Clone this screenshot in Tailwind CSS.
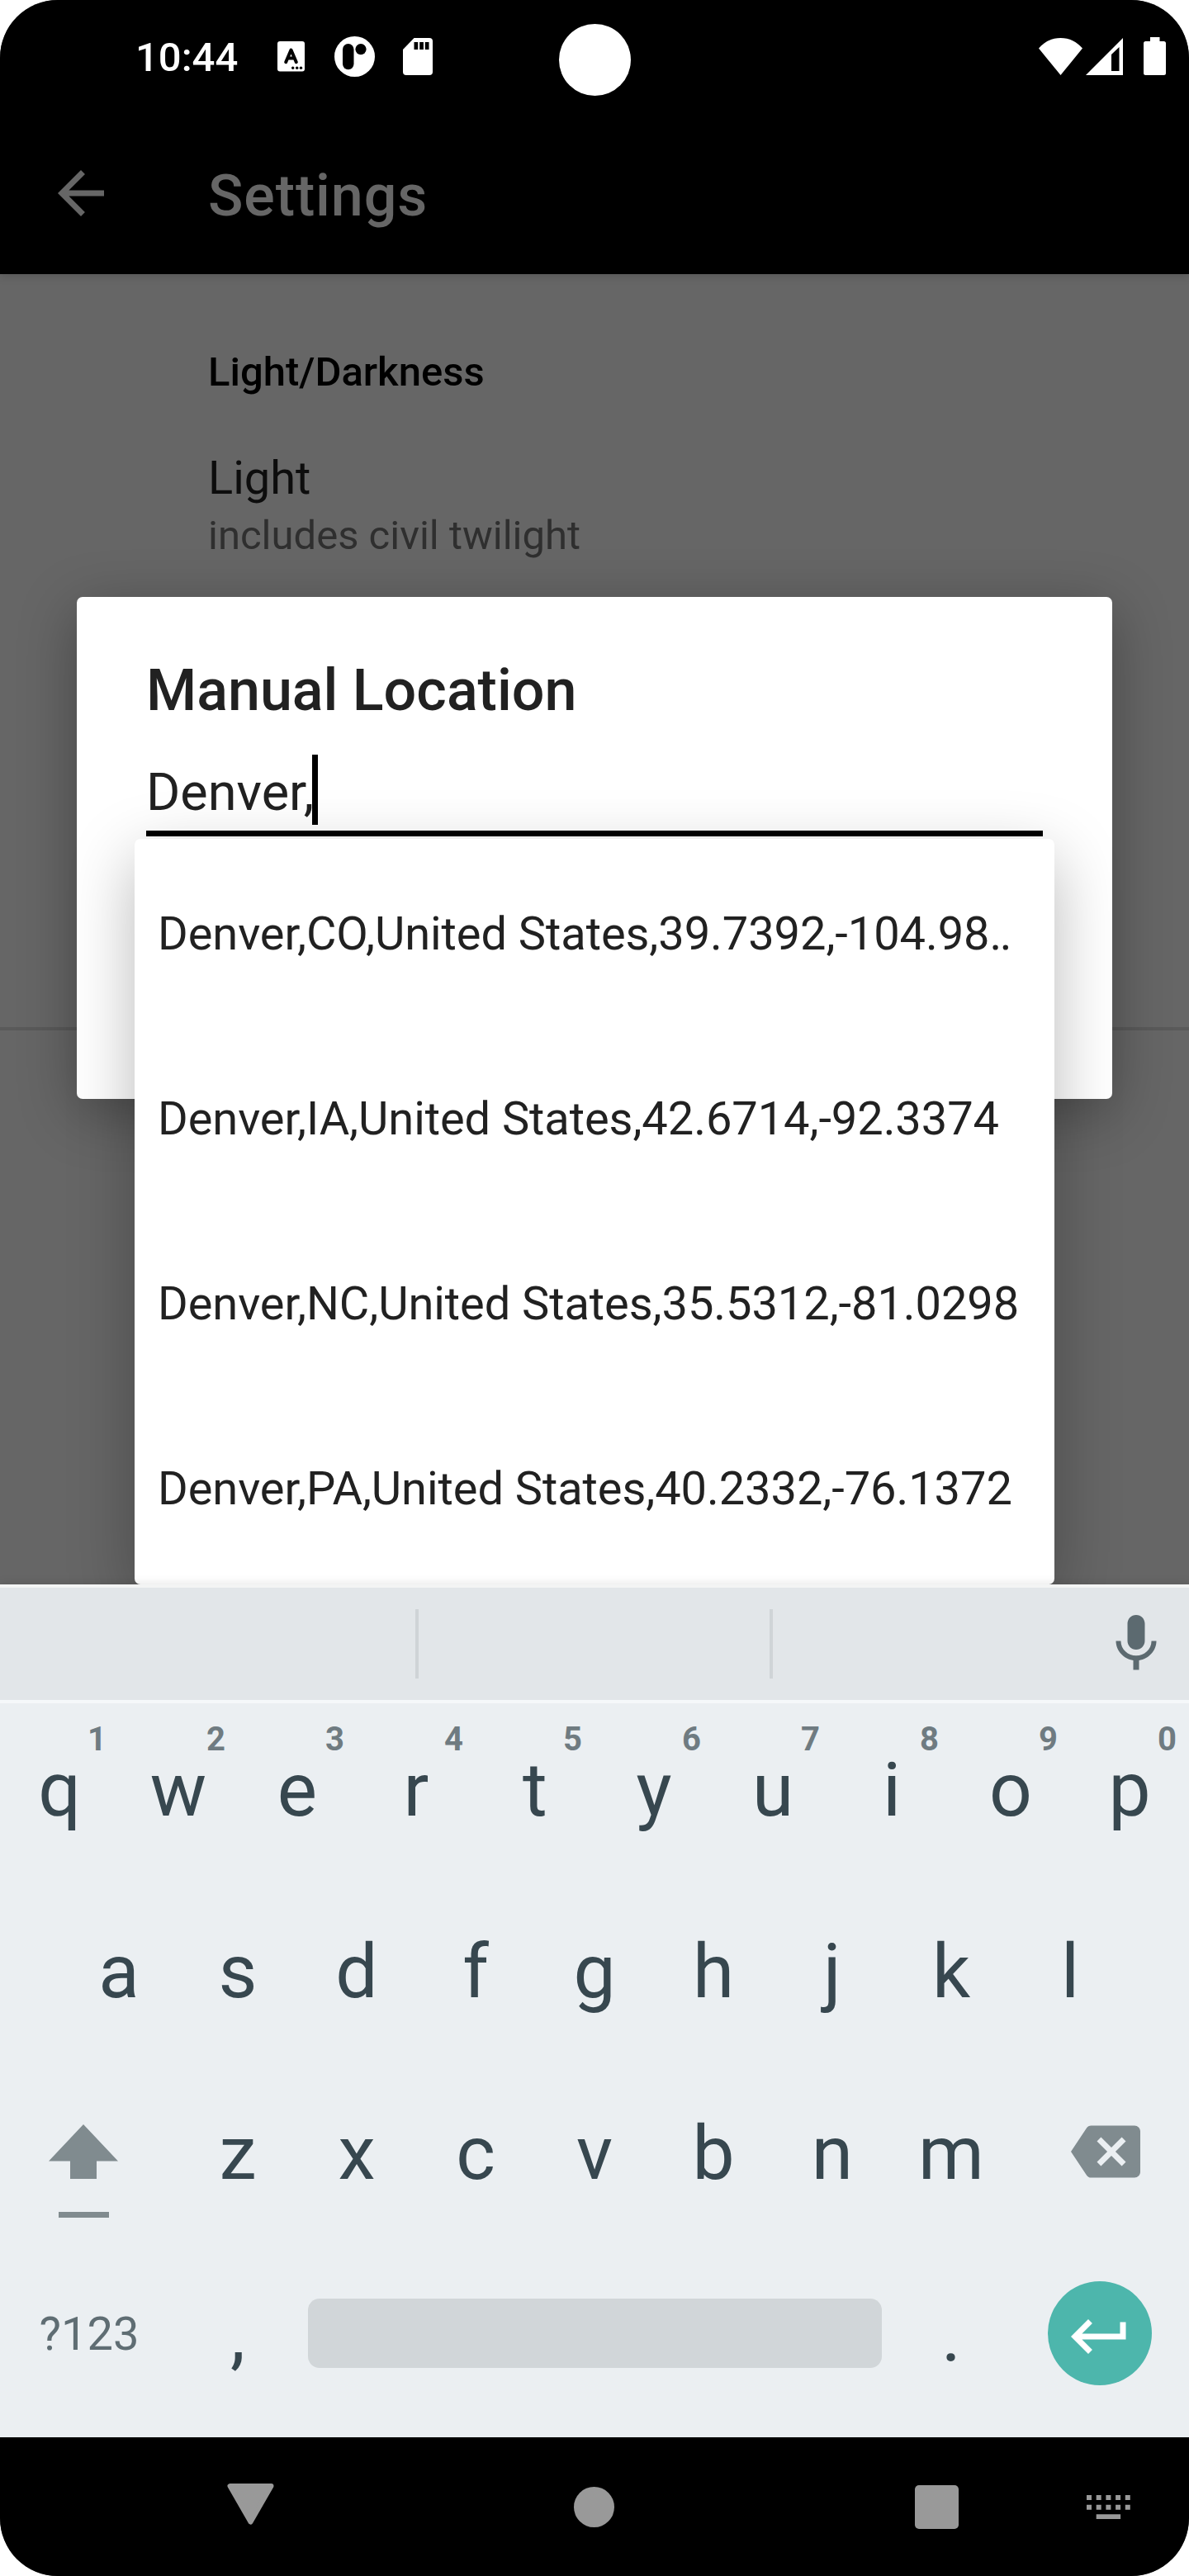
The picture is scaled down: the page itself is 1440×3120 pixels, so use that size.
<!DOCTYPE html>
<html lang="en">
<head>
<meta charset="utf-8">
<title>Settings – Manual Location</title>
<script src="https://cdn.jsdelivr.net/npm/@tailwindcss/browser@4"></script>
</head>
<body class="bg-white">
<div class="relative flex h-[3120px] w-[1440px] flex-col overflow-hidden rounded-[70px] bg-[#666666] font-[Roboto,sans-serif]">

  <!-- Status bar -->
  <div class="relative flex h-[136px] items-center bg-black pl-[164px] pr-[28px] text-white">
    <span class="w-[126px] whitespace-nowrap pt-[4px] text-[49px] font-medium leading-[58px]">10:44</span>
    <svg class="ml-[46px] h-[37px] w-[33px]" viewBox="0 0 33 37"><rect width="33" height="36.500" rx="3" fill="#fff"/><path d="M10.200 25.200 L16.500 10.500 L22.800 25.200 M13 20.500H20" fill="none" stroke="#000" stroke-width="4" stroke-linecap="round" stroke-linejoin="round"/><g fill="#000"><circle cx="18.700" cy="32.300" r="1.700"/><circle cx="23.700" cy="32.300" r="1.700"/><circle cx="28.500" cy="32.300" r="1.700"/></g></svg>
    <svg class="ml-[36px] h-[49px] w-[49px]" viewBox="0 0 49 49"><circle cx="24.500" cy="24.500" r="24.500" fill="#fff"/><rect x="10" y="9" width="13.500" height="31.300" rx="6.700" fill="#000"/><circle cx="32" cy="15.600" r="6.600" fill="#000"/></svg>
    <svg class="ml-[34px] h-[45px] w-[36px]" viewBox="0 0 36 45"><path d="M13.500 0H32a4 4 0 0 1 4 4V41a4 4 0 0 1-4 4H4a4 4 0 0 1-4-4V14Z" fill="#fff"/><path d="M13.500 5h4.700v9h-4.700zM20.200 5h4.700v9h-4.700zM26.800 5h4.700v9h-4.700z" fill="#000"/></svg>
    <div class="absolute left-[677px] top-[29px] size-[87px] rounded-full bg-white"></div>
    <svg class="ml-auto h-[45px] w-[53px]" viewBox="0 0 53 45"><path d="M0 12.500C7 4.500 16 0 26.500 0S46 4.500 53 12.500L26.500 45Z" fill="#fff"/></svg>
    <svg class="ml-[4px] h-[45px] w-[45px]" viewBox="0 0 45 45"><path fill-rule="evenodd" d="M45 0V45H0ZM31 20V40H40.500V11Z" fill="#fff"/></svg>
    <svg class="ml-[25px] h-[46px] w-[27px]" viewBox="0 0 27 46"><path d="M8 0H19.500V5H24.500a2.500 2.500 0 0 1 2.500 2.500V43.500a2.500 2.500 0 0 1-2.500 2.500H2.500a2.500 2.500 0 0 1-2.500-2.500V7.500a2.500 2.500 0 0 1 2.500-2.500H8Z" fill="#fff"/></svg>
  </div>

  <!-- App bar -->
  <header class="flex h-[196px] items-center bg-black pl-[56px] text-[#666666] shadow-[0_3px_10px_rgba(0,0,0,0.15)]">
    <svg class="size-[84px]" viewBox="0 0 24 24" fill="currentColor"><path d="M20 11H7.830l5.590-5.590L12 4l-8 8 8 8 1.410-1.410L7.830 13H20v-2z"/></svg>
    <h1 class="ml-[112px] pt-[6px] text-[70px] font-medium leading-[82px] tracking-[0.9px]">Settings</h1>
  </header>

  <!-- Settings list, dimmed behind the dialog -->
  <main class="h-[1587px]">
    <div class="flex h-[912px] flex-col pl-[252px] pt-[90px]">
      <h2 class="text-[49px] font-medium leading-[58px] text-black">Light/Darkness</h2>
      <p class="mt-[66px] text-[56px] leading-[66px] text-[#0d0d0d]">Light</p>
      <p class="mt-[8px] text-[49px] leading-[58px] text-[#2f2f2f]">includes civil twilight</p>
    </div>
    <div class="h-[4px] bg-[#5a5a5a]"></div>
  </main>

  <!-- Dialog -->
  <section class="absolute left-[93px] top-[723px] flex h-[608px] w-[1254px] flex-col rounded-[7px] bg-white px-[84px] pt-[72px] text-[#212121] shadow-[0_16px_70px_rgba(0,0,0,0.32)]">
    <h2 class="text-[70px] font-medium leading-[82px]">Manual Location</h2>
    <div class="flex h-[136px] items-start border-b-[7px] border-black pt-[37px]">
      <span class="w-[201px] whitespace-nowrap pt-[9px] text-[63px] leading-[74px]">Denver,</span>
      <span class="h-[85px] w-[7px] bg-black"></span>
    </div>
  </section>

  <!-- Suggestions -->
  <ul class="absolute left-[163px] top-[1016px] flex h-[903px] w-[1114px] flex-col rounded-[7px] bg-white px-[28px] pt-[3px] text-[56px] tracking-[-0.07px] text-[#212121] shadow-[0_24px_80px_rgba(0,0,0,0.28)]">
    <li class="h-[224px] whitespace-nowrap leading-[224px]">Denver,CO,United States,39.7392,-104.98<span class="tracking-[-2.4px]">..</span></li>
    <li class="h-[224px] whitespace-nowrap leading-[224px]">Denver,IA,United States,42.6714,-92.3374</li>
    <li class="h-[224px] whitespace-nowrap leading-[224px]">Denver,NC,United States,35.5312,-81.0298</li>
    <li class="h-[224px] whitespace-nowrap leading-[224px]">Denver,PA,United States,40.2332,-76.1372</li>
  </ul>

  <!-- Keyboard -->
  <div class="relative flex h-[1033px] flex-col bg-[#ebeff2] text-[91px] leading-[220px] text-[#37474f] shadow-[0_0_12px_rgba(0,0,0,0.12)]">
    <div class="flex h-[144px] items-center border-y-4 border-t-[#f3f4f4] border-b-[#f5f8fa] bg-[#e2e6e9]">
      <div class="ml-[503px] h-[84px] w-[4px] bg-[#cfd4d7]"></div>
      <div class="ml-[425px] h-[84px] w-[4px] bg-[#cfd4d7]"></div>
      <svg class="ml-[398px] size-[84px] text-[#5c6a70]" viewBox="0 0 24 24" fill="currentColor"><path d="M12 14c1.660 0 2.990-1.340 2.990-3L15 5c0-1.660-1.340-3-3-3S9 3.340 9 5v6c0 1.660 1.340 3 3 3zm5.300-3c0 3-2.540 5.100-5.300 5.100S6.700 14 6.700 11H5c0 3.410 2.720 6.230 6 6.720V21h2v-3.280c3.280-.480 6-3.300 6-6.720h-1.700z"/></svg>
    </div>
    <div class="-mt-[5px] grid h-[220px] grid-cols-10 text-center">
      <div class="relative">q<span class="absolute left-[106px] top-[25px] text-[40px] font-bold leading-[47px] text-[#6f7b81]">1</span></div>
      <div class="relative">w<span class="absolute left-[106px] top-[25px] text-[40px] font-bold leading-[47px] text-[#6f7b81]">2</span></div>
      <div class="relative">e<span class="absolute left-[106px] top-[25px] text-[40px] font-bold leading-[47px] text-[#6f7b81]">3</span></div>
      <div class="relative">r<span class="absolute left-[106px] top-[25px] text-[40px] font-bold leading-[47px] text-[#6f7b81]">4</span></div>
      <div class="relative">t<span class="absolute left-[106px] top-[25px] text-[40px] font-bold leading-[47px] text-[#6f7b81]">5</span></div>
      <div class="relative">y<span class="absolute left-[106px] top-[25px] text-[40px] font-bold leading-[47px] text-[#6f7b81]">6</span></div>
      <div class="relative">u<span class="absolute left-[106px] top-[25px] text-[40px] font-bold leading-[47px] text-[#6f7b81]">7</span></div>
      <div class="relative">i<span class="absolute left-[106px] top-[25px] text-[40px] font-bold leading-[47px] text-[#6f7b81]">8</span></div>
      <div class="relative">o<span class="absolute left-[106px] top-[25px] text-[40px] font-bold leading-[47px] text-[#6f7b81]">9</span></div>
      <div class="relative">p<span class="absolute left-[106px] top-[25px] text-[40px] font-bold leading-[47px] text-[#6f7b81]">0</span></div>
    </div>
    <div class="grid h-[220px] grid-cols-9 px-[72px] text-center">
      <div>a</div><div>s</div><div>d</div><div>f</div><div>g</div><div>h</div><div>j</div><div>k</div><div>l</div>
    </div>
    <div class="flex h-[220px] text-center">
      <div class="w-[216px] pl-[59px] pt-[75px]">
        <svg class="h-[113px] w-[84px] text-[#808b8f]" viewBox="0 0 84 113" fill="currentColor"><path d="M42 0L84 44.500H58V66H26V44.500H0ZM12 106H73V113H12Z"/></svg>
      </div>
      <div class="grid w-[1008px] grid-cols-7"><div>z</div><div>x</div><div>c</div><div>v</div><div>b</div><div>n</div><div>m</div></div>
      <div class="pl-[73px] pt-[66px]">
        <svg class="size-[84px] text-[#808b8f]" viewBox="0 0 24 24" fill="currentColor"><path d="M22 3H7c-.690 0-1.230.350-1.590.880L0 12l5.410 8.110c.360.530.900.890 1.590.890h15c1.100 0 2-.900 2-2V5c0-1.100-.900-2-2-2zm-3 12.590L17.590 17 14 13.410 10.410 17 9 15.590 12.590 12 9 8.410 10.410 7 14 10.590 17.590 7 19 8.410 15.410 12 19 15.590z"/></svg>
      </div>
    </div>
    <div class="flex h-[220px] items-center text-center">
      <div class="-mt-[2px] w-[216px] text-[56px] text-[#5f6d73]">?123</div>
      <div class="w-[144px]">,</div>
      <div class="-mt-[4px] ml-[13px] h-[84px] w-[695px] rounded-[14px] bg-[#d1d6d9]"></div>
      <div class="ml-[12px] w-[144px]">.</div>
      <div class="-mt-[4px] ml-[45px] flex size-[126px] items-center justify-center rounded-full bg-[#4db6ac] pt-[7px] text-white">
        <svg class="size-[84px]" viewBox="0 0 24 24" fill="currentColor"><path d="M19 7v4H5.830l3.580-3.590L8 6l-6 6 6 6 1.410-1.410L5.830 13H21V7h-2z"/></svg>
      </div>
    </div>
  </div>

  <!-- Navigation bar -->
  <nav class="flex h-[168px] items-center bg-black text-[#999999]">
    <svg class="-mt-[6px] ml-[275px] h-[50px] w-[57px]" viewBox="0 0 57 50" fill="currentColor" stroke="currentColor" stroke-width="6" stroke-linejoin="round"><path d="M3.500 3H53.500L28.500 46.500Z"/></svg>
    <div class="ml-[363px] size-[49px] rounded-full bg-[#999999]"></div>
    <div class="ml-[364px] size-[53px] rounded-[5px] bg-[#999999]"></div>
    <svg class="ml-[155px] h-[29px] w-[53px]" viewBox="0 0 53 29" fill="currentColor"><path d="M0 0h6v6H0zM11.700 0h6v6h-6zM23.400 0h6v6h-6zM35.100 0h6v6h-6zM46.800 0h6v6h-6zM0 11.700h6v6H0zM11.700 11.700h6v6h-6zM23.400 11.700h6v6h-6zM35.100 11.700h6v6h-6zM46.800 11.700h6v6h-6zM11.700 23.200h29.400v5.800h-29.400z"/></svg>
  </nav>
</div>
</body>
</html>
